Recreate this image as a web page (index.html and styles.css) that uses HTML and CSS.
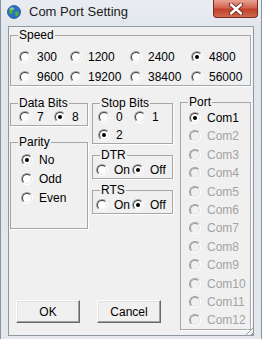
FILE: index.html
```html
<!DOCTYPE html>
<html>
<head>
<link rel="stylesheet" href="styles.css">
</head>
<body>
<div class="window">
	<div class="titlebar">
		<svg class="appicon" width="14" height="14" viewBox="0 0 14 14">
			<circle cx="7" cy="7" r="6.5" fill="#2d6fc4"/>
			<path d="M3 3.5 C4.5 2.5 6.5 2.8 6.8 4.2 C7 5.5 5.2 5.4 5.4 7 C5.6 8.6 4 9.6 3 8.6 C1.8 7.4 1.8 4.6 3 3.5 Z" fill="#4fb43a"/>
			<path d="M8.6 6.8 C10 6.2 11.8 7 11.6 8.8 C11.4 10.6 9.8 11.8 8.8 11 C8 10.3 8.8 9.4 8.2 8.6 C7.8 7.9 7.9 7.1 8.6 6.8 Z" fill="#4fb43a"/>
			<ellipse cx="5" cy="3.6" rx="2.6" ry="1.4" fill="#ffffff" opacity="0.35"/>
			<circle cx="7" cy="7" r="6.5" fill="none" stroke="#1d4f8f" stroke-width="0.8"/>
		</svg>
		<span class="title">Com Port Setting</span>
		<div class="closebtn">
			<svg width="16" height="12" viewBox="0 0 16 12">
				<path d="M3 1.5 L13 10.5 M13 1.5 L3 10.5" stroke="#6a231a" stroke-width="4.2" stroke-linecap="round"/>
				<path d="M3 1.5 L13 10.5 M13 1.5 L3 10.5" stroke="#ffffff" stroke-width="2.4" stroke-linecap="round"/>
			</svg>
		</div>
	</div>
	<div class="client">
		<fieldset class="group speed">
			<legend>Speed</legend>
			<div class="opts speed-opts">
				<label class="opt"><span class="radio"></span>300</label>
				<label class="opt"><span class="radio"></span>1200</label>
				<label class="opt"><span class="radio"></span>2400</label>
				<label class="opt"><span class="radio on"></span>4800</label>
				<label class="opt"><span class="radio"></span>9600</label>
				<label class="opt"><span class="radio"></span>19200</label>
				<label class="opt"><span class="radio"></span>38400</label>
				<label class="opt"><span class="radio"></span>56000</label>
			</div>
		</fieldset>
		<div class="main">
			<div class="left">
				<div class="cols">
					<div class="col1">
						<fieldset class="group databits">
							<legend>Data Bits</legend>
							<div class="opts two-opts">
								<label class="opt"><span class="radio"></span>7</label>
								<label class="opt"><span class="radio on"></span>8</label>
							</div>
						</fieldset>
						<fieldset class="group parity">
							<legend>Parity</legend>
							<div class="opts list-opts">
								<label class="opt"><span class="radio on"></span>No</label>
								<label class="opt"><span class="radio"></span>Odd</label>
								<label class="opt"><span class="radio"></span>Even</label>
							</div>
						</fieldset>
					</div>
					<div class="col2">
						<fieldset class="group stopbits">
							<legend>Stop Bits</legend>
							<div class="opts two-opts">
								<label class="opt"><span class="radio"></span>0</label>
								<label class="opt"><span class="radio"></span>1</label>
								<label class="opt"><span class="radio on"></span>2</label>
							</div>
						</fieldset>
						<fieldset class="group dtr">
							<legend>DTR</legend>
							<div class="opts two-opts">
								<label class="opt"><span class="radio"></span>On</label>
								<label class="opt"><span class="radio on"></span>Off</label>
							</div>
						</fieldset>
						<fieldset class="group rts">
							<legend>RTS</legend>
							<div class="opts two-opts">
								<label class="opt"><span class="radio"></span>On</label>
								<label class="opt"><span class="radio on"></span>Off</label>
							</div>
						</fieldset>
					</div>
				</div>
				<div class="buttons">
					<button class="btn">OK</button>
					<button class="btn">Cancel</button>
				</div>
			</div>
			<fieldset class="group port">
				<legend>Port</legend>
				<div class="opts port-opts">
					<label class="opt"><span class="radio on"></span>Com1</label>
					<label class="opt disabled"><span class="radio"></span>Com2</label>
					<label class="opt disabled"><span class="radio"></span>Com3</label>
					<label class="opt disabled"><span class="radio"></span>Com4</label>
					<label class="opt disabled"><span class="radio"></span>Com5</label>
					<label class="opt disabled"><span class="radio"></span>Com6</label>
					<label class="opt disabled"><span class="radio"></span>Com7</label>
					<label class="opt disabled"><span class="radio"></span>Com8</label>
					<label class="opt disabled"><span class="radio"></span>Com9</label>
					<label class="opt disabled"><span class="radio"></span>Com10</label>
					<label class="opt disabled"><span class="radio"></span>Com11</label>
					<label class="opt disabled"><span class="radio"></span>Com12</label>
				</div>
			</fieldset>
		</div>
		<div class="grip"></div>
	</div>
</div>
</body>
</html>
```
FILE: styles.css
```css
body{
	margin: 0;
	font-family: "Liberation Sans", Arial, sans-serif;
	font-size: 12px;
	color: #000;
}
.window{
	width: 262px;
	height: 339px;
	box-sizing: border-box;
	background: linear-gradient(#e9edf2, #e1e6ec 30px, #e4e8ed);
	border-left: 1px solid #8a949e;
	border-right: 1px solid #8a949e;
	overflow: hidden;
}
.titlebar{
	height: 26px;
	display: flex;
	align-items: flex-start;
	padding-left: 6px;
}
.appicon{
	margin-top: 5px;
}
.title{
	margin-top: 4px;
	margin-left: 8px;
	font-size: 13px;
	color: #1b1b1b;
}
.closebtn{
	margin-left: auto;
	margin-right: 3px;
	width: 45px;
	height: 18px;
	box-sizing: border-box;
	border: 1px solid #7a2a1e;
	border-top: none;
	border-radius: 0 0 4px 4px;
	background: linear-gradient(#e9a393, #d2654f 45%, #c0402a 55%, #cf6a4f);
	display: flex;
	align-items: center;
	justify-content: center;
}
.client{
	position: relative;
	margin-left: 7px;
	width: 246px;
	height: 310px;
	box-sizing: border-box;
	background: #f0f0f0;
	border: 1px solid #8e99a4;
	padding: 2px 0 0 1px;
}
.group{
	margin: 0;
	padding: 0 0 0 7px;
	border: 1px solid #a7a7a7;
	box-shadow: 1px 1px 0 #ffffff;
	min-width: 0;
}
.group legend{
	padding: 0 1px;
	line-height: 12px;
}
.opts{
	display: grid;
}
.opt{
	display: flex;
	align-items: center;
	gap: 6px;
	height: 14px;
	line-height: 14px;
	white-space: nowrap;
}
.radio{
	position: relative;
	flex: none;
	width: 12px;
	height: 12px;
	box-sizing: border-box;
	border-radius: 50%;
	border: 1px solid;
	border-color: #a0a0a0 #ffffff #ffffff #a0a0a0;
	background: #ffffff;
}
.radio::before{
	content: "";
	position: absolute;
	left: 0;
	top: 0;
	width: 10px;
	height: 10px;
	box-sizing: border-box;
	border-radius: 50%;
	border: 1px solid;
	border-color: #3c3c3c #e3e3e3 #e3e3e3 #3c3c3c;
}
.radio.on::after{
	content: "";
	position: absolute;
	left: 3px;
	top: 3px;
	width: 4px;
	height: 4px;
	border-radius: 50%;
	background: #000;
}
.disabled{
	color: #a3a3a3;
}
.disabled .radio{
	background: #f0f0f0;
}
.disabled .radio::before{
	border-color: #a0a0a0 #e3e3e3 #e3e3e3 #a0a0a0;
}

.speed{
	width: 241px;
	box-sizing: border-box;
	padding-top: 9px;
	padding-bottom: 1px;
}
.speed-opts{
	margin-left: 1px;
	grid-template-columns: 51px 60px 61px auto;
	row-gap: 6px;
}

.main{
	display: flex;
	margin-top: 11px;
	height: 234px;
}
.left{
	display: flex;
	flex-direction: column;
	width: 163px;
}
.cols{
	display: flex;
	gap: 4px;
}
.col1{
	width: 78px;
}
.col2{
	width: 81px;
}
.col1 .group, .col2 .group{
	box-sizing: border-box;
}
.two-opts{
	grid-template-columns: 36px auto;
	row-gap: 4px;
}
.databits{
	padding-top: 1px;
	padding-bottom: 1px;
}
.databits .opts{
	margin-left: 1px;
	grid-template-columns: 35px auto;
}
.parity{
	margin-top: 10px;
	padding-top: 5px;
	padding-bottom: 23px;
}
.list-opts{
	margin-left: 3px;
	row-gap: 5px;
}
.stopbits{
	padding-top: 1px;
	padding-bottom: 1px;
}
.stopbits .opts{
	margin-left: -2px;
}
.dtr, .rts{
	margin-top: 5px;
	padding-top: 2px;
	padding-bottom: 1px;
}
.dtr .opts, .rts .opts{
	margin-left: -4px;
}
.buttons{
	margin-top: auto;
	margin-bottom: 8px;
	padding-left: 6px;
	display: flex;
	gap: 17px;
}
.btn{
	width: 64px;
	height: 23px;
	padding: 0;
	font-family: "Liberation Sans", Arial, sans-serif;
	font-size: 12px;
	color: #000;
	background: #f0f0f0;
	border: 1px solid;
	border-color: #ffffff #696969 #696969 #ffffff;
	box-shadow: inset -1px -1px 0 #a0a0a0, inset 1px 1px 0 #e3e3e3;
}
.port{
	margin-left: 7px;
	margin-top: -1px;
	width: 71px;
	box-sizing: border-box;
	padding-top: 3px;
	padding-bottom: 2px;
	align-self: flex-start;
}
.port-opts{
	margin-left: 1px;
	row-gap: 4.4px;
}
.grip{
	position: absolute;
	right: 0;
	bottom: 0;
	width: 11px;
	height: 11px;
	background: repeating-linear-gradient(135deg, transparent 0 2px, #9a9a9a 2px 3px, #ffffff 3px 4px);
	clip-path: polygon(100% 0, 100% 100%, 0 100%);
}
```
